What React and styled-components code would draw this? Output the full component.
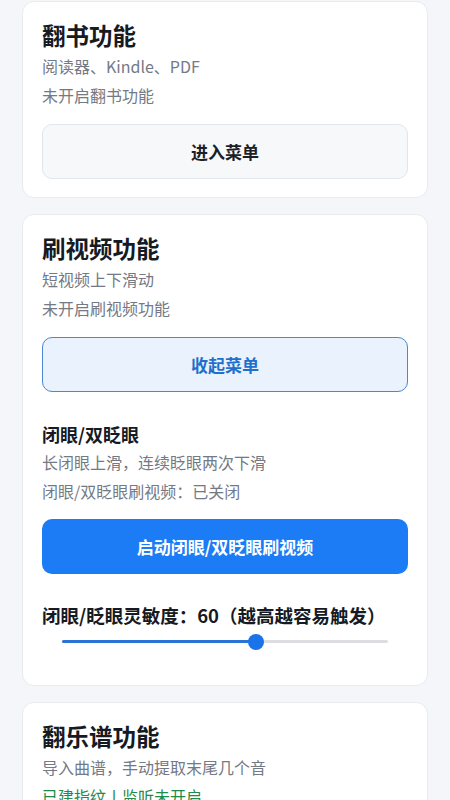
import React, { useState } from 'react';
import styled, { createGlobalStyle } from 'styled-components';

const GlobalStyle = createGlobalStyle`
  html, body {
    margin: 0;
    padding: 0;
    background: #f4f6fa;
  }
  body {
    font-family: 'Noto Sans CJK SC', 'Noto Sans', sans-serif;
  }
`;

const Page = styled.div`
  display: flex;
  flex-direction: column;
  gap: 16px;
  padding: 1px 22px 20px 22px;
  height: 800px;
  overflow: hidden;
  box-sizing: border-box;
`;

const Card = styled.div`
  background: #fff;
  border: 1px solid #e8ebf0;
  border-radius: 12px;
  padding: 16px 19px 18px 19px;
  display: flex;
  flex-direction: column;
  flex-shrink: 0;
`;

const Title = styled.div`
  font-size: 23.5px;
  font-weight: 700;
  color: #151a23;
  line-height: 34px;
`;

const Sub = styled.div`
  font-size: 16px;
  color: ${p => p.color || '#737a85'};
  line-height: 29px;
`;

const Button = styled.div`
  margin-top: ${p => p.top || 14}px;
  height: 55px;
  box-sizing: border-box;
  border-radius: 10px;
  display: flex;
  align-items: center;
  justify-content: center;
  font-size: 17px;
  font-weight: 700;
  ${p => p.kind === 'plain' && `
    background: #f7f8fa;
    border: 1.5px solid #e2e5ea;
    color: #1b1f27;
  `}
  ${p => p.kind === 'outline' && `
    background: #e9f2fd;
    border: 1.5px solid #4a88d0;
    color: #1f6fcc;
  `}
  ${p => p.kind === 'solid' && `
    background: #1b7cf5;
    border: none;
    color: #fff;
  `}
`;

const SectionTitle = styled.div`
  margin-top: 28px;
  font-size: 18px;
  font-weight: 700;
  color: #151a23;
  line-height: 28px;
`;

const Label = styled.div`
  margin-top: 28px;
  font-size: 18.5px;
  font-weight: 700;
  color: #151a23;
  line-height: 26px;
`;

const SliderWrap = styled.div`
  position: relative;
  margin: 2px 20px 13px 20px;
  height: 24px;
`;

const Track = styled.div`
  position: absolute;
  left: 0;
  right: 0;
  top: 10px;
  height: 3px;
  border-radius: 2px;
  background: #dcdee2;
`;

const Fill = styled.div`
  position: absolute;
  left: 0;
  top: 10px;
  height: 3px;
  border-radius: 2px;
  background: #2a75d4;
`;

const Thumb = styled.div`
  position: absolute;
  top: 4px;
  width: 16px;
  height: 16px;
  margin-left: -8px;
  border-radius: 50%;
  background: #1a73e8;
`;

function Slider({ value }) {
  const pct = ((value - 1) / (100 - 1)) * 100;
  return (
    <SliderWrap>
      <Track />
      <Fill style={{ width: `${pct}%` }} />
      <Thumb style={{ left: `${pct}%` }} />
    </SliderWrap>
  );
}

export default function App() {
  const [sensitivity] = useState(60);
  return (
    <>
      <GlobalStyle />
      <Page>
        <Card>
          <Title>翻书功能</Title>
          <Sub>阅读器、Kindle、PDF</Sub>
          <Sub>未开启翻书功能</Sub>
          <Button kind="plain">进入菜单</Button>
        </Card>

        <Card>
          <Title>刷视频功能</Title>
          <Sub>短视频上下滑动</Sub>
          <Sub>未开启刷视频功能</Sub>
          <Button kind="outline">收起菜单</Button>
          <SectionTitle>闭眼/双眨眼</SectionTitle>
          <Sub>长闭眼上滑，连续眨眼两次下滑</Sub>
          <Sub>闭眼/双眨眼刷视频：已关闭</Sub>
          <Button kind="solid" top={13}>启动闭眼/双眨眼刷视频</Button>
          <Label>闭眼/眨眼灵敏度：{sensitivity}（越高越容易触发）</Label>
          <Slider value={sensitivity} />
        </Card>

        <Card>
          <Title>翻乐谱功能</Title>
          <Sub>导入曲谱，手动提取末尾几个音</Sub>
          <Sub color="#1f8a4c">已建指纹丨监听未开启</Sub>
        </Card>
      </Page>
    </>
  );
}
